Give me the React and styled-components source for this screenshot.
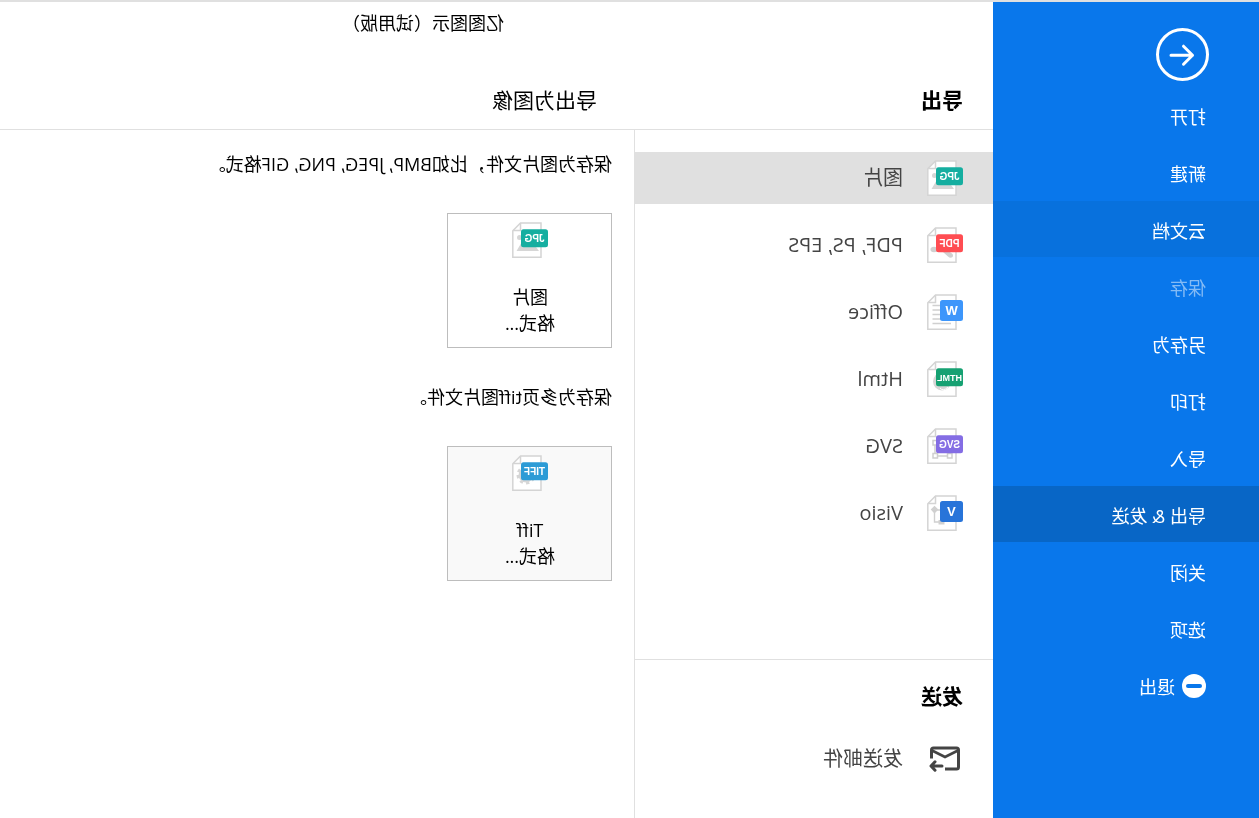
import React, {useState} from 'react';
import styled, {createGlobalStyle} from 'styled-components';

const GlobalStyle = createGlobalStyle`
  * {
    box-sizing: border-box;
  }
  body {
    margin: 0;
    background: #fff;
    overflow-x: hidden;
  }
  body, button {
    font-family: 'Open Sans', 'Noto Sans CJK SC', sans-serif;
  }
`;

// the whole window is flipped, sidebar ends up on the right
const Window = styled.div`
  display: flex;
  flex-direction: column;
  min-height: 100vh;
  border-top: 2px solid #e0e0e0;
  color: #000;
  transform: scaleX(-1);
`;

const Body = styled.div`
  display: flex;
  flex: 1;
`;

const Sidebar = styled.nav`
  width: 266px;
  flex-shrink: 0;
  background: #0977eb;
`;

const BackButton = styled.button`
  display: block;
  width: 53px;
  height: 53px;
  margin: 26px 0 6px 50px;
  padding: 0;
  border: none;
  background: none;
  cursor: pointer;

  svg {
    display: block;
  }
`;

const MenuList = styled.div`
  display: flex;
  flex-direction: column;
  gap: 1px;
`;

const MenuItem = styled.button`
  display: flex;
  align-items: center;
  gap: 7px;
  height: 56px;
  padding: 4px 0 0 53px;
  border: none;
  font-size: 18px;
  line-height: 26px;
  text-align: left;
  cursor: pointer;
  color: ${({disabled}) => (disabled ? '#84bbf5' : '#fff')};
  background: ${({$state}) =>
    $state === 'active' ? '#0866c6' : $state === 'hover' ? '#0871dd' : 'none'};

  svg {
    margin-bottom: 2px;
  }
`;

const Main = styled.main`
  display: flex;
  flex-direction: column;
  flex: 1;
  min-width: 0;
`;

const TitleBar = styled.header`
  height: 42px;
  padding: 8px 0 0 489px;
  font-size: 18px;
  line-height: 26px;
  white-space: nowrap;
`;

const Headings = styled.div`
  display: flex;
  height: 86px;
  padding-top: 41px;
  border-bottom: 1px solid #e0e0e0;
`;

const HeadCell = styled.div`
  width: 359px;
  padding-left: 30px;
`;

const Heading = styled.h2`
  margin: 0;
  font-size: 21px;
  line-height: 30px;
  font-weight: ${({$light}) => ($light ? 400 : 700)};
`;

const PageHeadCell = styled.div`
  flex: 1;
  padding-left: 37px;
`;

const Columns = styled.div`
  display: flex;
  flex: 1;
`;

const Middle = styled.div`
  display: flex;
  flex-direction: column;
  width: 359px;
  flex-shrink: 0;
  border-right: 1px solid #e0e0e0;
`;

const FormatList = styled.div`
  display: flex;
  flex-direction: column;
  gap: 15px;
  height: 529px;
  padding-top: 22px;
`;

const ListItem = styled.button`
  display: flex;
  align-items: center;
  gap: 24px;
  width: 100%;
  height: 52px;
  padding: 0 0 0 30px;
  border: none;
  font-size: 20px;
  line-height: 28px;
  text-align: left;
  color: #444;
  cursor: pointer;
  background: ${({$active}) => ($active ? '#e0e0e0' : 'none')};
`;

const SendSection = styled.section`
  flex: 1;
  padding-top: 21px;
  border-top: 1px solid #e0e0e0;

  ${Heading} {
    padding: 0 0 22px 30px;
  }
`;

const Detail = styled.div`
  flex: 1;
  padding: 21px 22px;
`;

const Description = styled.p`
  margin: 0 0 36px;
  font-size: 18px;
  line-height: 26px;
`;

const Card = styled.button`
  display: flex;
  flex-direction: column;
  align-items: center;
  width: 165px;
  height: 135px;
  margin-bottom: 36px;
  padding: 8px 1px 0 0;
  border: 1px solid #bdbdbd;
  font-size: 18px;
  line-height: 26px;
  color: #000;
  cursor: pointer;
  background: ${({$tinted}) => ($tinted ? '#f9f9f9' : '#fff')};

  svg {
    margin-bottom: 26px;
  }
`;

const Icon = styled.svg`
  display: block;
  flex-shrink: 0;
`;

const BadgeText = styled.text`
  font-family: 'Liberation Sans', sans-serif;
  font-size: ${({$size}) => $size}px;
  font-weight: 700;
  fill: #fff;
  text-anchor: middle;
`;

const shapes = {
  jpg: (
    <g fill="#d6d6d6">
      <circle cx="28.5" cy="15.5" r="2.5" />
      <path d="M9 29 L17 18 L21 23 L25 18 L31.5 29 Z" />
    </g>
  ),
  pdf: (
    <g fill="#d0d0d0">
      <ellipse cx="29" cy="22.5" rx="3.5" ry="2.7" />
      <path d="M17 24 C15 24 10 26 10 28.5 C10 31 13 31.5 15 29.5 L20 25 Z" />
    </g>
  ),
  office: (
    <path
      d="M12 11.5H30.5 M12 16H30.5 M12 20.5H30.5 M12 25H30.5 M12 29.5H30.5"
      stroke="#d0d0d0"
      strokeWidth="1.3"
    />
  ),
  html: (
    <g>
      <circle cx="21" cy="20.5" r="9" fill="#d6d6d6" />
      <path d="M15 26 Q20 31 23 27" fill="none" stroke="#fff" strokeWidth="1" />
    </g>
  ),
  svg: (
    <g fill="none" stroke="#cfcfcf" strokeWidth="1.5">
      <path d="M13.5 15h14.5v13h-14.5z" />
      <path d="M25.5 12.5h4.5v4.5h-4.5z M25.5 25.5h4.5v4.5h-4.5z M11 25.5h4.5v4.5h-4.5z" fill="#fff" />
    </g>
  ),
  visio: (
    <g>
      <path d="M20 15H28.5V27H20" fill="none" stroke="#d0d0d0" strokeWidth="1.4" />
      <path d="M28.5 10.8 L32.3 14.6 L28.5 18.4 L24.7 14.6 Z" fill="#d0d0d0" />
      <path d="M18.5 25h6v4.5h-6z" fill="#d0d0d0" />
    </g>
  ),
  tiff: (
    <g>
      <circle cx="22" cy="20" r="5.5" fill="none" stroke="#d6d6d6" strokeWidth="4" />
      <circle cx="22" cy="20" r="8.2" fill="none" stroke="#d6d6d6" strokeWidth="2.6" strokeDasharray="3.22 3.22" />
    </g>
  ),
};

const badges = {
  jpg: {text: 'JPG', color: '#15aea0'},
  pdf: {text: 'PDF', color: '#ff4d52'},
  office: {text: 'W', color: '#3d96fb', square: true},
  html: {text: 'HTML', color: '#16a172', size: 9},
  svg: {text: 'SVG', color: '#846de4'},
  visio: {text: 'V', color: '#2874d9', square: true},
  tiff: {text: 'TIFF', color: '#2c9bd6'},
};

const FileIcon = ({type}) => {
  const {text, color, square, size = 10} = badges[type];
  return (
    <Icon width="36" height="36" viewBox="0 0 36 36" aria-hidden="true">
      <path d="M7 1 H27.5 L35.2 8.7 V35.2 H7 Z" fill="#fff" stroke="#d4d4d4" strokeWidth="1.5" />
      <path d="M27.5 1 V8.5 H35" fill="none" stroke="#d4d4d4" strokeWidth="1.5" />
      {shapes[type]}
      {square ? (
        <rect x="0" y="6" width="23" height="21" rx="2.5" fill={color} />
      ) : (
        <rect x="0" y="7.3" width="27" height="18" rx="2.5" fill={color} />
      )}
      {square ? (
        <BadgeText x="11.5" y="21" $size={13}>
          {text}
        </BadgeText>
      ) : (
        <BadgeText x="13.5" y="20" $size={size}>
          {text}
        </BadgeText>
      )}
    </Icon>
  );
};

const MailIcon = () => (
  <Icon width="36" height="36" viewBox="0 0 36 36" fill="none" stroke="#444" strokeWidth="3" aria-hidden="true">
    <path d="M18 28 H6.5 Q4.5 28 4.5 26 V9 Q4.5 7 6.5 7 H29.5 Q31.5 7 31.5 9 V17.5" />
    <path d="M5 9.5 L18 16 L31 9.5" strokeWidth="2.6" />
    <path d="M21 25 H31.5 M28 20.8 L32 25 L28 29.2" strokeWidth="3" strokeLinecap="round" strokeLinejoin="round" />
  </Icon>
);

const MinusIcon = () => (
  <Icon width="24" height="24" viewBox="0 0 24 24" aria-hidden="true">
    <circle cx="12" cy="12" r="12" fill="#fff" />
    <rect x="4" y="10" width="16" height="4" rx="2" fill="#0977eb" />
  </Icon>
);

const menuItems = [
  {name: '打开'},
  {name: '新建'},
  {name: '云文档', state: 'hover'},
  {name: '保存', disabled: true},
  {name: '另存为'},
  {name: '打印'},
  {name: '导入'},
  {name: '导出 & 发送', state: 'active'},
  {name: '关闭'},
  {name: '选项'},
  {name: '退出', icon: <MinusIcon />},
];

const formats = [
  {name: '图片', type: 'jpg'},
  {name: 'PDF, PS, EPS', type: 'pdf'},
  {name: 'Office', type: 'office'},
  {name: 'Html', type: 'html'},
  {name: 'SVG', type: 'svg'},
  {name: 'Visio', type: 'visio'},
];

const App = () => {
  const [format, setFormat] = useState('jpg');

  return (
    <Window>
      <GlobalStyle />
      <Body>
        <Sidebar>
          <BackButton aria-label="返回">
            <svg width="53" height="53" viewBox="0 0 53 53" fill="none" stroke="#fff" strokeWidth="3">
              <circle cx="26.5" cy="26.5" r="25" />
              <path d="M38 27.2 H16.5 M25.5 18.2 L16.5 27.2 L25.5 36.2" strokeLinecap="round" strokeLinejoin="round" />
            </svg>
          </BackButton>
          <MenuList>
            {menuItems.map((item) => (
              <MenuItem
                key={item.name}
                disabled={item.disabled}
                $state={item.state}
              >
                {item.icon}
                {item.name}
              </MenuItem>
            ))}
          </MenuList>
        </Sidebar>
        <Main>
          <TitleBar>亿图图示（试用版）</TitleBar>
          <Headings>
            <HeadCell>
              <Heading>导出</Heading>
            </HeadCell>
            <PageHeadCell>
              <Heading $light>导出为图像</Heading>
            </PageHeadCell>
          </Headings>
          <Columns>
            <Middle>
              <FormatList>
                {formats.map((item) => (
                  <ListItem
                    key={item.type}
                    $active={item.type === format}
                    onClick={() => setFormat(item.type)}
                  >
                    <FileIcon type={item.type} />
                    {item.name}
                  </ListItem>
                ))}
              </FormatList>
              <SendSection>
                <Heading>发送</Heading>
                <ListItem>
                  <MailIcon />
                  发送邮件
                </ListItem>
              </SendSection>
            </Middle>
            <Detail>
              <Description>保存为图片文件，比如BMP, JPEG, PNG, GIF格式。</Description>
              <Card>
                <FileIcon type="jpg" />
                <span>图片</span>
                <span>格式...</span>
              </Card>
              <Description>保存为多页tiff图片文件。</Description>
              <Card $tinted>
                <FileIcon type="tiff" />
                <span>Tiff</span>
                <span>格式...</span>
              </Card>
            </Detail>
          </Columns>
        </Main>
      </Body>
    </Window>
  );
};

export default App;
